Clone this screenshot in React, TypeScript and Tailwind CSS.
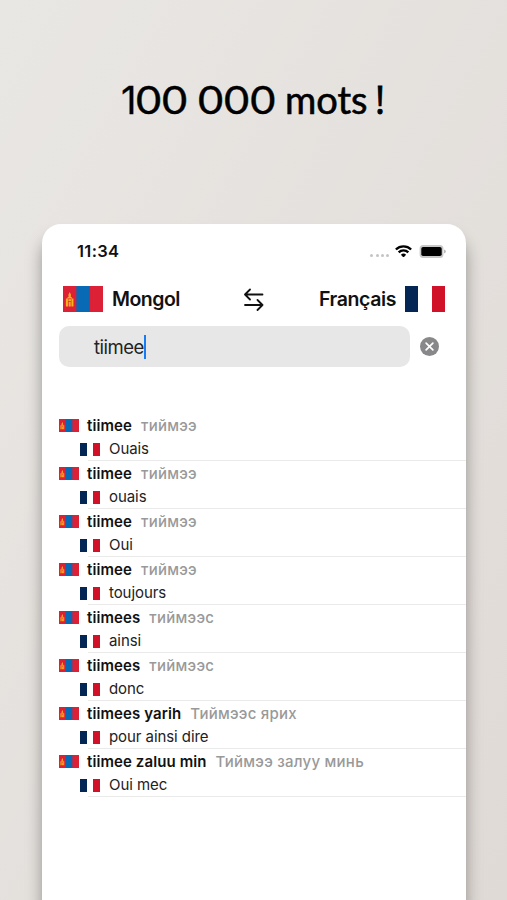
interface FlagProps {
  className: string;
}

interface Entry {
  latin: string;
  cyrillic: string;
  french: string;
}

const entries: Entry[] = [
  { latin: 'tiimee', cyrillic: 'тиймээ', french: 'Ouais' },
  { latin: 'tiimee', cyrillic: 'тиймээ', french: 'ouais' },
  { latin: 'tiimee', cyrillic: 'тиймээ', french: 'Oui' },
  { latin: 'tiimee', cyrillic: 'тиймээ', french: 'toujours' },
  { latin: 'tiimees', cyrillic: 'тиймээс', french: 'ainsi' },
  { latin: 'tiimees', cyrillic: 'тиймээс', french: 'donc' },
  { latin: 'tiimees yarih', cyrillic: 'Тиймээс ярих', french: 'pour ainsi dire' },
  { latin: 'tiimee zaluu min', cyrillic: 'Тиймээ залуу минь', french: 'Oui mec' },
];

function MongolianFlag({ className }: FlagProps) {
  return (
    <svg viewBox="0 0 39 26" preserveAspectRatio="none" className={className}>
      <path fill="#dc2035" d="M0 0h39v26H0z" />
      <path fill="#0869b5" d="M13 0h13v26H13z" />
      {/* Soyombo */}
      <g fill="#f9b21c">
        <path d="M6.5 6c.3 1.2 1.3 1.8 1.2 3l-.2 2.5h-2L5.3 9c0-1 .9-1.5 1.2-3z" />
        <path d="M4.5 11h4v1.5h-4zM2.8 12.5h2v8h-2zM8.2 12.5h2v8h-2zM5.2 13.2h2.6v2H5.2zM5.5 16h2v4.5h-2z" />
      </g>
    </svg>
  );
}

function FrenchFlag({ className }: FlagProps) {
  return (
    <div className={`flex ${className}`}>
      <div className="flex-1 bg-[#042654]" />
      <div className="flex-1 bg-white" />
      <div className="flex-1 bg-[#d01127]" />
    </div>
  );
}

function StatusBar() {
  return (
    <div className="flex h-[54px] items-center justify-between pl-[35px] pr-[20px]">
      <span className="text-[16.5px] font-semibold tracking-[0.35px]">11:34</span>
      <div className="flex items-center">
        <div className="mt-[8px] mr-[6px] flex gap-[2.2px]">
          <span className="size-[3px] rounded-full bg-[#c4c4c4]" />
          <span className="size-[3px] rounded-full bg-[#c4c4c4]" />
          <span className="size-[3px] rounded-full bg-[#c4c4c4]" />
          <span className="size-[3px] rounded-full bg-[#c4c4c4]" />
        </div>
        <svg viewBox="0 0 17 12.5" className="mr-[7px] h-[12.5px] w-[17px]" fill="none" stroke="#000" strokeWidth="2.4">
          <path d="M.9 4.5a10.8 10.8 0 0 1 15.2 0M3.7 7.4a6.8 6.8 0 0 1 9.6 0" />
          <path fill="#000" stroke="none" d="M8.5 12.5 5.9 9.8a3.7 3.7 0 0 1 5.2 0z" />
        </svg>
        <svg viewBox="0 0 27 13" className="h-[13px] w-[27px]">
          <rect x=".6" y=".1" width="23.8" height="12.8" rx="3.5" fill="#c8c8c8" />
          <rect x="2.3" y="2" width="20.4" height="9" rx="1.8" fill="#000" />
          <path fill="#aaa" d="M25.2 4.5q1.5.6 1.5 2t-1.5 2z" />
        </svg>
      </div>
    </div>
  );
}

function LanguageBar() {
  return (
    <div className="flex h-[42px] items-center justify-between pl-[21px] pr-[21px]">
      <div className="flex w-[160px] items-center gap-[9px]">
        <MongolianFlag className="h-[26px] w-[40px]" />
        <span className="pt-[2px] text-[19.5px] font-semibold tracking-[-0.5px]">Mongol</span>
      </div>
      <svg viewBox="0 0 20 24" className="h-[24px] w-[20px]" fill="none" stroke="#111" strokeWidth="1.8" strokeLinecap="round" strokeLinejoin="round">
        <path d="M18.5 7.5h-17M6 2.5l-5 5 5 5M1 18h17.5M13.5 13l5 5-5 5" />
      </svg>
      <div className="flex w-[160px] items-center justify-end gap-[9px]">
        <span className="pt-[2px] text-[19.5px] font-semibold tracking-[-0.4px]">Français</span>
        <FrenchFlag className="h-[26px] w-[40px]" />
      </div>
    </div>
  );
}

function SearchBar() {
  return (
    <div className="mt-[6px] flex items-center pl-[17px]">
      <div className="flex h-[41px] w-[351px] items-center rounded-[10px] bg-[#e7e7e7] pl-[35px]">
        <span className="pt-[2px] text-[18.5px] tracking-[-0.5px] text-[#222]">tiimee</span>
        <span className="h-[24px] w-[2px] bg-[#167df5]" />
      </div>
      <svg viewBox="0 0 18 18" className="ml-[10px] size-[19px]">
        <circle cx="9" cy="9" r="9" fill="#88888b" />
        <path d="m5.8 5.8 6.4 6.4m0-6.4-6.4 6.4" stroke="#fff" strokeWidth="1.6" strokeLinecap="round" />
      </svg>
    </div>
  );
}

function EntryRow({ entry }: { entry: Entry }) {
  return (
    <li className="h-[48px] pl-[17px]">
      <div className="flex h-[24px] items-center whitespace-nowrap">
        <MongolianFlag className="h-[13px] w-[20px]" />
        <span className="ml-[8px] pt-[2px] text-[15px] font-semibold tracking-[0.1px]">{entry.latin}</span>
        <span className="ml-[9px] pt-[2px] text-[15px] font-medium tracking-[0.25px] text-[#999]">{entry.cyrillic}</span>
      </div>
      <div className="ml-[29px] h-[24px] border-b border-[#eaeaea]">
        <div className="-ml-[8px] flex h-[24px] items-center">
          <FrenchFlag className="h-[13px] w-[20px]" />
          <span className="ml-[9px] pt-px text-[15px] tracking-[-0.07px] text-[#222]">{entry.french}</span>
        </div>
      </div>
    </li>
  );
}

export default function App() {
  return (
    <div className="flex h-[900px] w-[507px] flex-col overflow-hidden bg-linear-to-br from-[#e9e7e4] to-[#e0dad6] font-['Inter','Liberation_Sans',sans-serif] text-[#111]">
      <h1 className="flex h-[224px] items-baseline pt-[69px] pl-[121px] font-['Lato',sans-serif] text-[38px] whitespace-pre text-black">
        <span className="w-[15px] font-['Inter',sans-serif] [-webkit-text-stroke:0.3px_#000]">1</span>
        <span className="w-[62px] origin-left scale-x-[1.1] text-[39.5px] tracking-[0.8px] [-webkit-text-stroke:0.4px_#000]">00</span>
        <span className="w-[87px] origin-left scale-x-[1.1] text-[39.5px] tracking-[0.8px] [-webkit-text-stroke:0.4px_#000]">000</span>
        <span className="w-[90px] [-webkit-text-stroke:0.6px_#000]">mots</span>
        <span className="font-['Open_Sans',sans-serif] [-webkit-text-stroke:0.8px_#000]">!</span>
      </h1>
      <main className="ml-[42px] w-[424px] flex-1 rounded-t-[19px] bg-white shadow-[0_14px_16px_rgba(0,0,0,0.35)]">
        <StatusBar />
        <LanguageBar />
        <SearchBar />
        <ul className="mt-[46px]">
          {entries.map((entry, index) => (
            <EntryRow key={index} entry={entry} />
          ))}
        </ul>
      </main>
    </div>
  );
}
